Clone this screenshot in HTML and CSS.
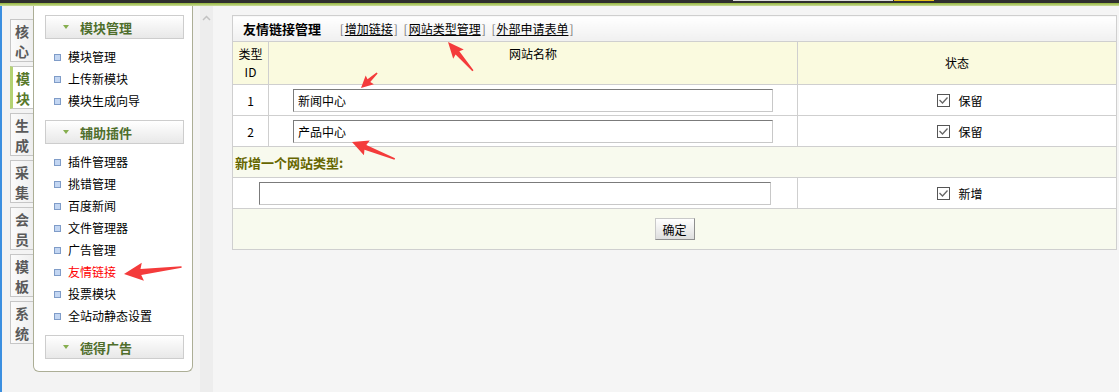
FILE: index.html
```html
<!DOCTYPE html>
<html lang="zh-CN">

<head>
  <meta charset="UTF-8">
  <meta name="viewport" content="width=device-width, initial-scale=1.0">
  <title>友情链接管理</title>
  <link rel="stylesheet" href="styles.css">
</head>

<body>
  <div class="topbar">
    <span class="top-search"></span>
    <span class="top-search-btn"></span>
  </div>

  <div class="layout">
    <div class="left-frame">
      <ul class="tabs">
        <li>核<br>心</li>
        <li class="active">模<br>块</li>
        <li>生<br>成</li>
        <li>采<br>集</li>
        <li>会<br>员</li>
        <li>模<br>板</li>
        <li>系<br>统</li>
      </ul>

      <div class="menu">
        <div class="menu-title"><i class="arrow-down"></i>模块管理</div>
        <ul class="menu-list">
          <li>模块管理</li>
          <li>上传新模块</li>
          <li>模块生成向导</li>
        </ul>
        <div class="menu-title"><i class="arrow-down"></i>辅助插件</div>
        <ul class="menu-list">
          <li>插件管理器</li>
          <li>挑错管理</li>
          <li>百度新闻</li>
          <li>文件管理器</li>
          <li>广告管理</li>
          <li class="current">友情链接</li>
          <li>投票模块</li>
          <li>全站动静态设置</li>
        </ul>
        <div class="menu-title"><i class="arrow-down"></i>德得广告</div>
      </div>
    </div>

    <div class="scroll-strip">
      <svg width="13" height="8" viewBox="0 0 13 8"><polyline points="3,6 6.5,2.5 10,6" fill="none" stroke="#c2c2c2" stroke-width="1.5"/></svg>
    </div>

    <div class="main">
      <form action="friendlink.php" method="POST">
        <table class="link-table">
          <colgroup>
            <col style="width: 36px">
            <col style="width: 529px">
            <col style="width: 319px">
          </colgroup>
          <tr class="title-row">
            <td colspan="3">
              <span class="box-title">友情链接管理</span>
              <span class="title-links"><b>[</b><a href="#">增加链接</a><b>]</b> <b>[</b><a href="#">网站类型管理</a><b>]</b> <b>[</b><a href="#">外部申请表单</a><b>]</b></span>
            </td>
          </tr>
          <tr class="head-row">
            <th class="id-head">类型<br>ID</th>
            <th class="name-head">网站名称</th>
            <th>状态</th>
          </tr>
          <tr class="data-row">
            <td class="id-cell">1</td>
            <td class="name-cell"><input type="text" class="name-input" name="name[1]" value="新闻中心"></td>
            <td class="state-cell"><label class="check"><span class="check-box"><svg width="11" height="11" viewBox="0 0 11 11"><polyline points="1.5,5 4.5,8 9.5,2.5" fill="none" stroke="#666" stroke-width="1.3"/></svg></span>保留</label></td>
          </tr>
          <tr class="data-row">
            <td class="id-cell">2</td>
            <td class="name-cell"><input type="text" class="name-input" name="name[2]" value="产品中心"></td>
            <td class="state-cell"><label class="check"><span class="check-box"><svg width="11" height="11" viewBox="0 0 11 11"><polyline points="1.5,5 4.5,8 9.5,2.5" fill="none" stroke="#666" stroke-width="1.3"/></svg></span>保留</label></td>
          </tr>
          <tr class="section-row">
            <td colspan="3">新增一个网站类型:</td>
          </tr>
          <tr class="data-row">
            <td colspan="2" class="name-cell"><input type="text" class="new-input" name="new_name"></td>
            <td class="state-cell"><label class="check"><span class="check-box"><svg width="11" height="11" viewBox="0 0 11 11"><polyline points="1.5,5 4.5,8 9.5,2.5" fill="none" stroke="#666" stroke-width="1.3"/></svg></span>新增</label></td>
          </tr>
          <tr class="submit-row">
            <td colspan="3"><input type="submit" class="submit-btn" value="确定"></td>
          </tr>
        </table>
      </form>
    </div>
  </div>

  <!-- red annotation arrows drawn over the screenshot -->
  <svg class="marks" width="1119" height="392" viewBox="0 0 1119 392">
    <g fill="#f43b3b">
      <polygon transform="translate(124,274) rotate(-6.9)" points="0,0 19,-9 17,-3 58,-0.8 58,0.8 17,3 19,9"/>
      <polygon transform="translate(448,42) rotate(49)" points="0,0 16,-7 14.4,-2.5 38,-0.8 38,0.8 14.4,2.5 16,7"/>
      <polygon transform="translate(361,88) rotate(-43)" points="0,0 12,-6 10.8,-2 22,-0.8 22,0.8 10.8,2 12,6"/>
      <polygon transform="translate(352,142) rotate(21.6)" points="0,0 16,-8 14.4,-2.5 46,-0.8 46,0.8 14.4,2.5 16,8"/>
    </g>
  </svg>
</body>

</html>
```

FILE: styles.css
```css
* {
  box-sizing: border-box;
}

body {
  margin: 0;
  background-color: #f5f5f5;
  font-family: "Noto Sans CJK SC", sans-serif;
  font-size: 12px;
  color: #000;
  overflow: hidden;
}

.topbar {
  display: flex;
  height: 6px;
  background: linear-gradient(#2f2f2f 0, #2f2f2f 3px, #93b53b 3px, #cadb9c 6px);
}

.top-search {
  margin-left: 733px;
  width: 160px;
  height: 1px;
  background-color: #dedede;
}

.top-search-btn {
  margin-left: 1px;
  width: 40px;
  height: 1px;
  background-color: #e6c21d;
}

.layout {
  display: flex;
  height: 386px;
}

.left-frame {
  display: flex;
  width: 200px;
  flex-shrink: 0;
  border-left: 2px solid #3b8fe0;
  background-color: #f3f3f3;
}

.tabs {
  list-style: none;
  margin: 0;
  padding: 13px 0 0 8px;
  width: 31px;
  display: flex;
  flex-direction: column;
  gap: 4px;
}

.tabs li {
  width: 23px;
  height: 43px;
  padding-top: 1px;
  border: 1px solid #c6c6c6;
  border-right: none;
  background: linear-gradient(to right, #fbfbfb, #eeeeee);
  font-size: 14px;
  font-weight: bold;
  line-height: 20px;
  text-align: center;
  color: #5a5a5a;
}

.tabs li.active {
  background: #fff;
  border-left: 3px solid #b4d273;
  color: #58792a;
}

.menu {
  align-self: flex-start;
  width: 160px;
  padding: 9px 8px 12px 11px;
  border: 1px solid #acae96;
  border-top: none;
  border-radius: 0 0 6px 6px;
  background-color: #fff;
}

.menu-title {
  display: flex;
  align-items: center;
  height: 24px;
  border: 1px solid #cdcdcd;
  background: linear-gradient(#fff, #e8e8e8);
  font-size: 13px;
  font-weight: bold;
  color: #4f6e2c;
}

.arrow-down {
  width: 0;
  height: 0;
  margin: 0 11px 0 17px;
  border-left: 3px solid transparent;
  border-right: 3px solid transparent;
  border-top: 4px solid #86ae4f;
}

.menu-list {
  list-style: none;
  margin: 7px 0 8px;
  padding: 0;
}

.menu-list li {
  display: flex;
  align-items: center;
  height: 22px;
  padding-left: 9px;
  line-height: 22px;
}

.menu-list li::before {
  content: "";
  width: 5px;
  height: 5px;
  margin-right: 7px;
  border: 1px solid #7f9cc8;
  background-color: #c3d6f2;
}

.menu-list li.current {
  color: #f00;
}

.scroll-strip {
  width: 13px;
  flex-shrink: 0;
  padding-top: 8px;
  background-color: #ededed;
}

.scroll-strip svg {
  display: block;
}

.main {
  flex: 1;
  padding: 9px 0 0 19px;
}

.link-table {
  width: 884px;
  border-collapse: collapse;
  table-layout: fixed;
  background-color: #fff;
}

.link-table td,
.link-table th {
  padding: 0;
  border: 1px solid #cfcfcf;
  font-weight: normal;
}

.title-row td {
  height: 26px;
  padding-left: 10px;
  background: linear-gradient(#fff, #f0f0f0);
}

.box-title {
  font-size: 13px;
  font-weight: bold;
}

.title-links {
  margin-left: 16px;
  word-spacing: 3px;
}

.title-links b {
  font-weight: normal;
  color: #777;
}

.title-links a {
  margin: 0 1px;
  color: #000;
  text-decoration: underline;
}

.head-row th {
  height: 43px;
  background-color: #fafadf;
  line-height: 18px;
  text-align: center;
  vertical-align: middle;
}

.head-row .name-head {
  vertical-align: top;
  padding-top: 3px;
}

.data-row td {
  height: 31px;
}

.id-cell {
  text-align: center;
}

.name-cell {
  text-align: center;
}

.name-input,
.new-input {
  height: 23px;
  padding: 0 4px;
  border: 1px solid;
  border-color: #7b7b7b #c8c8c8 #c8c8c8 #7b7b7b;
  font-family: "Noto Sans CJK SC", sans-serif;
  font-size: 12px;
  vertical-align: middle;
}

.name-input {
  width: 480px;
}

.new-input {
  width: 512px;
}

.state-cell {
  text-align: center;
  padding-left: 5px !important;
}

.check {
  display: inline-flex;
  align-items: center;
  gap: 9px;
}

.check-box {
  display: inline-flex;
  align-items: center;
  justify-content: center;
  width: 13px;
  height: 13px;
  border: 1px solid #555;
  background-color: #fff;
}

.section-row td {
  height: 31px;
  padding-left: 2px;
  background-color: #f8faee;
  color: #666600;
  font-size: 13px;
  font-weight: bold;
}

.submit-row td {
  height: 41px;
  background-color: #f8faee;
  text-align: center;
}

.submit-btn {
  width: 40px;
  height: 22px;
  padding: 0;
  border: 1px solid;
  border-color: #c9c9c9 #8e8e8e #8e8e8e #c9c9c9;
  background: linear-gradient(#fff, #dedede);
  font-family: "Noto Sans CJK SC", sans-serif;
  font-size: 12px;
  color: #000;
}

.marks {
  position: absolute;
  top: 0;
  left: 0;
  pointer-events: none;
}
```
